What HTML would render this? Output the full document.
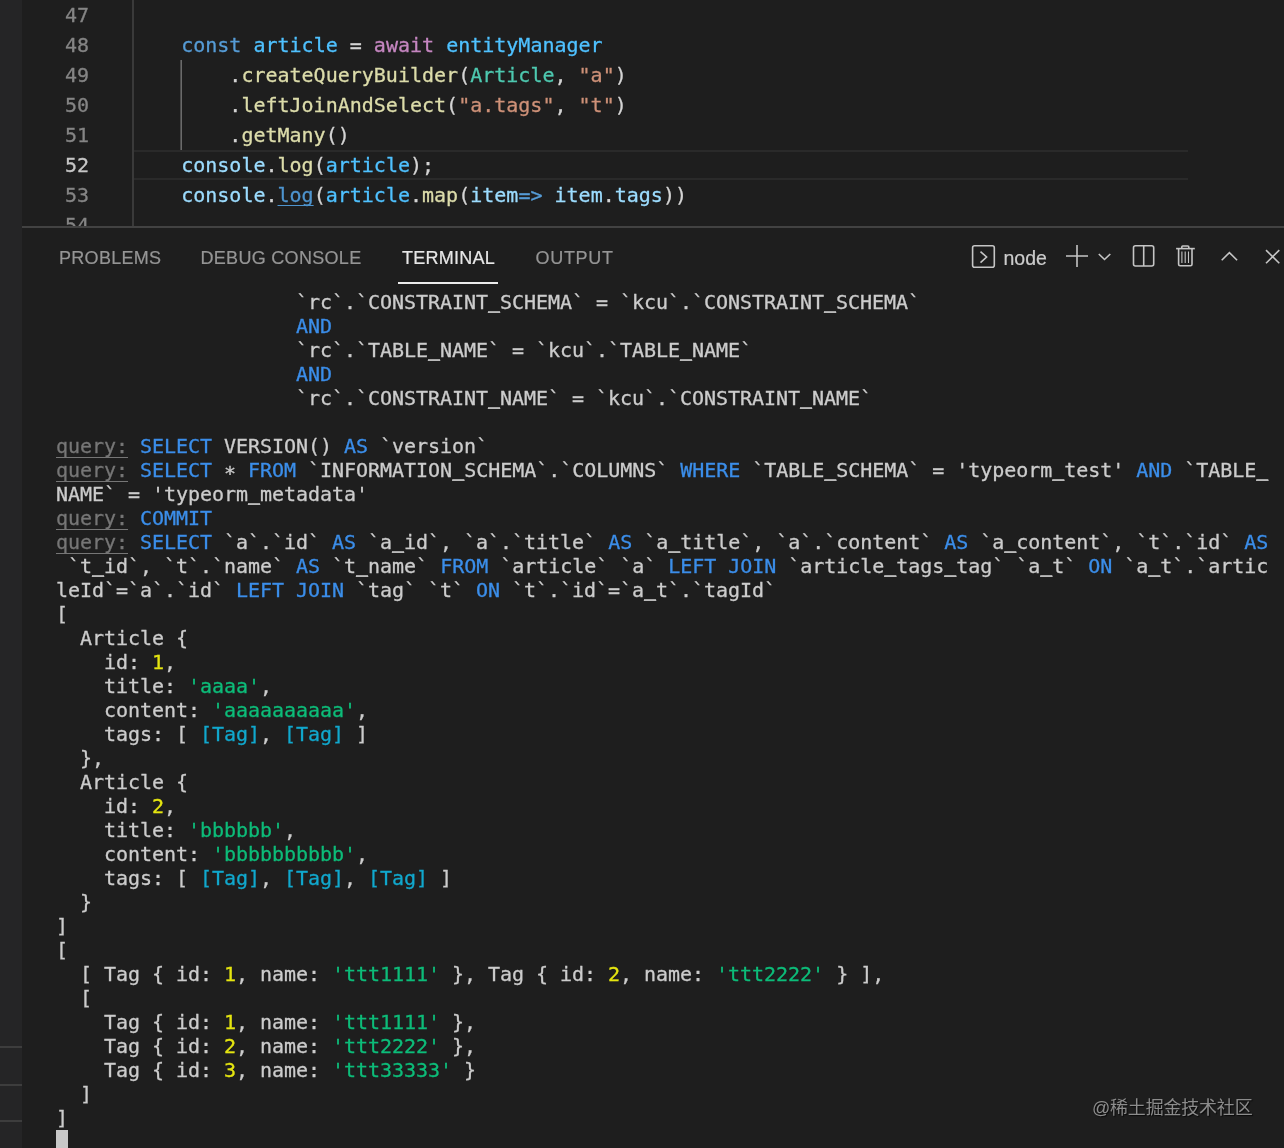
<!DOCTYPE html>
<html><head><meta charset="utf-8"><title>VS Code</title>
<style>
html,body{margin:0;padding:0;background:#1e1e1e;}
body{width:1284px;height:1148px;position:relative;overflow:hidden;font-family:"DejaVu Sans Mono","Liberation Mono",monospace;}
.abs{position:absolute;}
#root{position:absolute;left:0;top:0;width:1284px;height:1148px;will-change:transform;}
.ln,.cl,.tl{-webkit-text-stroke:0.3px;}
#side{left:0;top:0;width:22px;height:1148px;background:#252526;}
.sl{left:0;width:22px;height:2px;background:#3d3d3d;}
.ln{left:41px;width:48px;text-align:right;color:#858585;font-size:20px;line-height:30px;height:30px;white-space:pre;letter-spacing:-0.04px;}
.ln.cur{color:#c6c6c6;}
.cl{left:133px;font-size:20px;line-height:30px;height:30px;white-space:pre;color:#d4d4d4;}
.k{color:#569cd6}.v{color:#4fc1ff}.p{color:#9cdcfe}.a{color:#c586c0}.f{color:#dcdcaa}.t{color:#4ec9b0}.s{color:#ce9178}
.ig{width:1px;background:#404040;}
#curline{left:134px;top:150px;width:1054px;height:26px;border-top:2px solid #2a2a2a;border-bottom:2px solid #2a2a2a;}
#pborder{left:22px;top:226px;width:1262px;height:2px;background:#424242;}
#panelmask{left:22px;top:228px;width:1262px;height:920px;background:#1e1e1e;}
.tab{font-family:"Liberation Sans",sans-serif;font-size:18px;line-height:24px;color:#959595;top:246px;white-space:pre;letter-spacing:0.3px;-webkit-text-stroke:0.2px;}
.tab.on{color:#e7e7e7;}
#tul{left:398px;top:282px;width:100px;height:2px;background:#ececec;}
.tl{left:56px;font-size:20px;line-height:24px;height:24px;white-space:pre;color:#cccccc;letter-spacing:-0.04px;}
.q{color:#767676;text-decoration:underline;text-decoration-thickness:1px;text-underline-offset:4px;text-decoration-skip-ink:none;}
i{font-style:normal;position:relative;top:-1px;text-shadow:0 -1px 0 currentColor;}
.st{position:relative;top:3px;}
.b{color:#3b8eea}.y{color:#e5e510}.g{color:#0dbc79}.c{color:#11a8cd}
#cursor{left:56px;top:1130px;width:12px;height:18px;background:#c8c8c8;}
#wm{font-family:"Liberation Sans","Noto Sans CJK SC",sans-serif;font-size:18px;color:#8c8c8c;left:1092px;top:1096px;line-height:24px;white-space:pre;letter-spacing:-0.2px;text-shadow:1px 1px 1px rgba(0,0,0,0.7);}
</style></head><body><div id="root">
<div id="side" class="abs"></div>
<div class="abs sl" style="top:1046px"></div>
<div class="abs sl" style="top:1084px"></div>
<div class="abs sl" style="top:1120px"></div>

<!-- editor -->
<div class="abs" style="left:132px;top:0;height:227px;width:2px;background:#3a3a3a"></div>
<div class="abs" style="left:180px;top:60px;height:90px;width:1px;background:#4a4a4a"></div><div class="abs" style="left:181px;top:60px;height:90px;width:1px;background:#6a6a6a"></div>
<div id="curline" class="abs"></div>
<div class="abs ln" style="top:0px">47</div>
<div class="abs ln" style="top:30px">48</div>
<div class="abs ln" style="top:60px">49</div>
<div class="abs ln" style="top:90px">50</div>
<div class="abs ln" style="top:120px">51</div>
<div class="abs ln cur" style="top:150px">52</div>
<div class="abs ln" style="top:180px">53</div>
<div class="abs ln" style="top:210px">54</div>
<div class="abs cl" style="top:30px">    <span class="k">const</span> <span class="v">article</span> = <span class="a">await</span> <span class="v">entityManager</span></div>
<div class="abs cl" style="top:60px">        .<span class="f">createQueryBuilder</span>(<span class="t">Article</span>, <span class="s">"a"</span>)</div>
<div class="abs cl" style="top:90px">        .<span class="f">leftJoinAndSelect</span>(<span class="s">"a.tags"</span>, <span class="s">"t"</span>)</div>
<div class="abs cl" style="top:120px">        .<span class="f">getMany</span>()</div>
<div class="abs cl" style="top:150px">    <span class="p">console</span>.<span class="f">log</span>(<span class="v">article</span>);</div>
<div class="abs cl" style="top:180px">    <span class="p">console</span>.<span style="color:#4e94ce;text-decoration:underline;text-decoration-thickness:1px;text-underline-offset:3px;text-decoration-skip-ink:none">log</span>(<span class="v">article</span>.<span class="f">map</span>(<span class="p">item</span><span class="k">=&gt;</span> <span class="p">item</span>.<span class="p">tags</span>))</div>

<!-- panel -->
<div id="panelmask" class="abs"></div>
<div id="pborder" class="abs"></div>
<div class="abs tab" style="left:59px">PROBLEMS</div>
<div class="abs tab" style="left:200.5px">DEBUG CONSOLE</div>
<div class="abs tab on" style="left:402px;letter-spacing:0.26px">TERMINAL</div>
<div class="abs tab" style="left:535.5px;letter-spacing:0.7px">OUTPUT</div>
<div id="tul" class="abs"></div>
<div class="abs tab" style="left:1003.5px;color:#cccccc;font-size:19.5px;letter-spacing:0">node</div>
<svg class="abs" style="left:960px;top:236px" width="324" height="44" viewBox="960 236 324 44" fill="none" stroke="#c5c5c5" stroke-width="1.6">
<rect x="972.6" y="245.8" width="21.7" height="21.5" rx="2"/>
<polyline points="980.5,251.6 986.6,257 980.5,262.6"/>
<path d="M1066 256H1088M1077 245V267"/>
<polyline points="1098.8,254 1104.5,259.5 1110.3,254"/>
<rect x="1133.5" y="245.8" width="20.2" height="20.2" rx="2"/>
<path d="M1143.7 245.8V266"/>
<path d="M1176.1 248.6H1194.8"/>
<path d="M1181.8 248.6V247a1 1 0 0 1 1 -1H1187.8a1 1 0 0 1 1 1V248.6"/>
<path d="M1178.6 248.6V264.3a1.5 1.5 0 0 0 1.5 1.5H1190.5a1.5 1.5 0 0 0 1.5 -1.5V248.6"/>
<path d="M1181.9 251.6V263M1185.2 251.6V263M1188.5 251.6V263" stroke-width="1.1"/>
<polyline points="1221.7,260.2 1229.4,252.6 1237.1,260.2"/>
<path d="M1266 250.1L1279.3 263.2M1279.3 250.1L1266 263.2"/>
</svg>

<!-- terminal -->
<div class="abs tl" style="top:290px">                    `rc`.`CONSTRAINT<i>_</i>SCHEMA` = `kcu`.`CONSTRAINT<i>_</i>SCHEMA`</div>
<div class="abs tl" style="top:314px">                    <span class="b">AND</span></div>
<div class="abs tl" style="top:338px">                    `rc`.`TABLE<i>_</i>NAME` = `kcu`.`TABLE<i>_</i>NAME`</div>
<div class="abs tl" style="top:362px">                    <span class="b">AND</span></div>
<div class="abs tl" style="top:386px">                    `rc`.`CONSTRAINT<i>_</i>NAME` = `kcu`.`CONSTRAINT<i>_</i>NAME`</div>
<div class="abs tl" style="top:434px"><span class="q">query:</span> <span class="b">SELECT</span> VERSION() <span class="b">AS</span> `version`</div>
<div class="abs tl" style="top:458px"><span class="q">query:</span> <span class="b">SELECT</span> <span class="st">*</span> <span class="b">FROM</span> `INFORMATION<i>_</i>SCHEMA`.`COLUMNS` <span class="b">WHERE</span> `TABLE<i>_</i>SCHEMA` = 'typeorm<i>_</i>test' <span class="b">AND</span> `TABLE<i>_</i></div>
<div class="abs tl" style="top:482px">NAME` = 'typeorm<i>_</i>metadata'</div>
<div class="abs tl" style="top:506px"><span class="q">query:</span> <span class="b">COMMIT</span></div>
<div class="abs tl" style="top:530px"><span class="q">query:</span> <span class="b">SELECT</span> `a`.`id` <span class="b">AS</span> `a<i>_</i>id`, `a`.`title` <span class="b">AS</span> `a<i>_</i>title`, `a`.`content` <span class="b">AS</span> `a<i>_</i>content`, `t`.`id` <span class="b">AS</span></div>
<div class="abs tl" style="top:554px"> `t<i>_</i>id`, `t`.`name` <span class="b">AS</span> `t<i>_</i>name` <span class="b">FROM</span> `article` `a` <span class="b">LEFT JOIN</span> `article<i>_</i>tags<i>_</i>tag` `a<i>_</i>t` <span class="b">ON</span> `a<i>_</i>t`.`artic</div>
<div class="abs tl" style="top:578px">leId`=`a`.`id` <span class="b">LEFT JOIN</span> `tag` `t` <span class="b">ON</span> `t`.`id`=`a<i>_</i>t`.`tagId`</div>
<div class="abs tl" style="top:602px">[</div>
<div class="abs tl" style="top:626px">  Article {</div>
<div class="abs tl" style="top:650px">    id: <span class="y">1</span>,</div>
<div class="abs tl" style="top:674px">    title: <span class="g">'aaaa'</span>,</div>
<div class="abs tl" style="top:698px">    content: <span class="g">'aaaaaaaaaa'</span>,</div>
<div class="abs tl" style="top:722px">    tags: [ <span class="c">[Tag]</span>, <span class="c">[Tag]</span> ]</div>
<div class="abs tl" style="top:746px">  },</div>
<div class="abs tl" style="top:770px">  Article {</div>
<div class="abs tl" style="top:794px">    id: <span class="y">2</span>,</div>
<div class="abs tl" style="top:818px">    title: <span class="g">'bbbbbb'</span>,</div>
<div class="abs tl" style="top:842px">    content: <span class="g">'bbbbbbbbbb'</span>,</div>
<div class="abs tl" style="top:866px">    tags: [ <span class="c">[Tag]</span>, <span class="c">[Tag]</span>, <span class="c">[Tag]</span> ]</div>
<div class="abs tl" style="top:890px">  }</div>
<div class="abs tl" style="top:914px">]</div>
<div class="abs tl" style="top:938px">[</div>
<div class="abs tl" style="top:962px">  [ Tag { id: <span class="y">1</span>, name: <span class="g">'ttt1111'</span> }, Tag { id: <span class="y">2</span>, name: <span class="g">'ttt2222'</span> } ],</div>
<div class="abs tl" style="top:986px">  [</div>
<div class="abs tl" style="top:1010px">    Tag { id: <span class="y">1</span>, name: <span class="g">'ttt1111'</span> },</div>
<div class="abs tl" style="top:1034px">    Tag { id: <span class="y">2</span>, name: <span class="g">'ttt2222'</span> },</div>
<div class="abs tl" style="top:1058px">    Tag { id: <span class="y">3</span>, name: <span class="g">'ttt33333'</span> }</div>
<div class="abs tl" style="top:1082px">  ]</div>
<div class="abs tl" style="top:1106px">]</div>
<div id="cursor" class="abs"></div>
<div id="wm" class="abs">@稀土掘金技术社区</div>
</div></body></html>
